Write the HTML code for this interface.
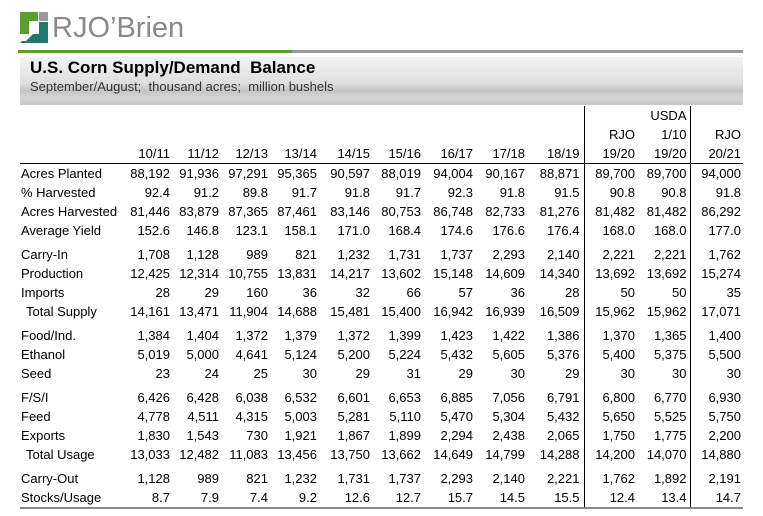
<!DOCTYPE html>
<html><head><meta charset="utf-8"><style>
body{margin:0;width:763px;height:516px;background:#fff;position:relative;overflow:hidden;font-family:"Liberation Sans",sans-serif;color:#000}
.abs{position:absolute}
table{position:absolute;left:20px;top:106px;border-collapse:collapse;font-size:13px;table-layout:fixed}
td{padding:0 2px 0 0;text-align:right;white-space:nowrap;height:19px;line-height:19px}
td:first-child{text-align:left;padding-left:1px}
td.v1{border-right:1px solid #000;padding-right:4px}
td.v2{border-right:1px solid #000;padding-right:3px}
tr.h td{height:19px;line-height:19px}
tr.hl td{border-bottom:1px solid #000}
tr.g td{padding-top:5px}
tr.last td{border-bottom:2px solid #888}
.ind{padding-left:6px!important}
</style></head><body>
<svg class="abs" style="left:20px;top:12px" width="28" height="31" viewBox="0 0 28 31">
<path d="M0 0H18V9H9V22H0Z" fill="#5a9e2f"/>
<rect x="19" y="0" width="9" height="9" fill="#9a9a9a"/>
<path d="M9 22H19V10H28V31H0Z" fill="#1f7a6a"/>
<path d="M2 29L9 22H13L6 29Z" fill="#fff"/>
</svg>
<div class="abs" style="left:52px;top:11px;font-size:29px;color:#8a8a8a;letter-spacing:0px;line-height:34px">RJO’Brien</div>
<div class="abs" style="left:18px;top:50px;width:274px;height:3px;background:#5aa02c"></div>
<div class="abs" style="left:292px;top:50px;width:451px;height:3px;background:#9a9a9a"></div>
<div class="abs" style="left:20px;top:57px;width:723px;height:48px;background:linear-gradient(#f4f4f4 0%,#dedede 55%,#c4c4c4 70%,#d6d6d6 85%,#c8c8c8 100%)"></div>
<div class="abs" style="left:30px;top:57px;font-size:17px;font-weight:bold;line-height:21px">U.S. Corn Supply/Demand&nbsp; Balance</div>
<div class="abs" style="left:30px;top:79px;font-size:13px;color:#333;line-height:16px">September/August;&nbsp; thousand acres;&nbsp; million bushels</div>
<table>
<colgroup><col style="width:101px"><col style="width:51px"><col style="width:49px"><col style="width:49px"><col style="width:49px"><col style="width:53px"><col style="width:51px"><col style="width:52px"><col style="width:52px"><col style="width:57px"><col style="width:53px"><col style="width:53px"><col style="width:53px"></colgroup>
<tr class="h"><td></td><td></td><td></td><td></td><td></td><td></td><td></td><td></td><td></td><td class="v1"></td><td></td><td class="v2">USDA</td><td></td></tr>
<tr class="h"><td></td><td></td><td></td><td></td><td></td><td></td><td></td><td></td><td></td><td class="v1"></td><td>RJO</td><td class="v2">1/10</td><td>RJO</td></tr>
<tr class="h hl"><td></td><td>10/11</td><td>11/12</td><td>12/13</td><td>13/14</td><td>14/15</td><td>15/16</td><td>16/17</td><td>17/18</td><td class="v1">18/19</td><td>19/20</td><td class="v2">19/20</td><td>20/21</td></tr>
<tr><td>Acres Planted</td><td>88,192</td><td>91,936</td><td>97,291</td><td>95,365</td><td>90,597</td><td>88,019</td><td>94,004</td><td>90,167</td><td class="v1">88,871</td><td>89,700</td><td class="v2">89,700</td><td>94,000</td></tr>
<tr><td>% Harvested</td><td>92.4</td><td>91.2</td><td>89.8</td><td>91.7</td><td>91.8</td><td>91.7</td><td>92.3</td><td>91.8</td><td class="v1">91.5</td><td>90.8</td><td class="v2">90.8</td><td>91.8</td></tr>
<tr><td>Acres Harvested</td><td>81,446</td><td>83,879</td><td>87,365</td><td>87,461</td><td>83,146</td><td>80,753</td><td>86,748</td><td>82,733</td><td class="v1">81,276</td><td>81,482</td><td class="v2">81,482</td><td>86,292</td></tr>
<tr><td>Average Yield</td><td>152.6</td><td>146.8</td><td>123.1</td><td>158.1</td><td>171.0</td><td>168.4</td><td>174.6</td><td>176.6</td><td class="v1">176.4</td><td>168.0</td><td class="v2">168.0</td><td>177.0</td></tr>
<tr class="g"><td>Carry-In</td><td>1,708</td><td>1,128</td><td>989</td><td>821</td><td>1,232</td><td>1,731</td><td>1,737</td><td>2,293</td><td class="v1">2,140</td><td>2,221</td><td class="v2">2,221</td><td>1,762</td></tr>
<tr><td>Production</td><td>12,425</td><td>12,314</td><td>10,755</td><td>13,831</td><td>14,217</td><td>13,602</td><td>15,148</td><td>14,609</td><td class="v1">14,340</td><td>13,692</td><td class="v2">13,692</td><td>15,274</td></tr>
<tr><td>Imports</td><td>28</td><td>29</td><td>160</td><td>36</td><td>32</td><td>66</td><td>57</td><td>36</td><td class="v1">28</td><td>50</td><td class="v2">50</td><td>35</td></tr>
<tr><td class="ind">Total Supply</td><td>14,161</td><td>13,471</td><td>11,904</td><td>14,688</td><td>15,481</td><td>15,400</td><td>16,942</td><td>16,939</td><td class="v1">16,509</td><td>15,962</td><td class="v2">15,962</td><td>17,071</td></tr>
<tr class="g"><td>Food/Ind.</td><td>1,384</td><td>1,404</td><td>1,372</td><td>1,379</td><td>1,372</td><td>1,399</td><td>1,423</td><td>1,422</td><td class="v1">1,386</td><td>1,370</td><td class="v2">1,365</td><td>1,400</td></tr>
<tr><td>Ethanol</td><td>5,019</td><td>5,000</td><td>4,641</td><td>5,124</td><td>5,200</td><td>5,224</td><td>5,432</td><td>5,605</td><td class="v1">5,376</td><td>5,400</td><td class="v2">5,375</td><td>5,500</td></tr>
<tr><td>Seed</td><td>23</td><td>24</td><td>25</td><td>30</td><td>29</td><td>31</td><td>29</td><td>30</td><td class="v1">29</td><td>30</td><td class="v2">30</td><td>30</td></tr>
<tr class="g"><td>F/S/I</td><td>6,426</td><td>6,428</td><td>6,038</td><td>6,532</td><td>6,601</td><td>6,653</td><td>6,885</td><td>7,056</td><td class="v1">6,791</td><td>6,800</td><td class="v2">6,770</td><td>6,930</td></tr>
<tr><td>Feed</td><td>4,778</td><td>4,511</td><td>4,315</td><td>5,003</td><td>5,281</td><td>5,110</td><td>5,470</td><td>5,304</td><td class="v1">5,432</td><td>5,650</td><td class="v2">5,525</td><td>5,750</td></tr>
<tr><td>Exports</td><td>1,830</td><td>1,543</td><td>730</td><td>1,921</td><td>1,867</td><td>1,899</td><td>2,294</td><td>2,438</td><td class="v1">2,065</td><td>1,750</td><td class="v2">1,775</td><td>2,200</td></tr>
<tr><td class="ind">Total Usage</td><td>13,033</td><td>12,482</td><td>11,083</td><td>13,456</td><td>13,750</td><td>13,662</td><td>14,649</td><td>14,799</td><td class="v1">14,288</td><td>14,200</td><td class="v2">14,070</td><td>14,880</td></tr>
<tr class="g"><td>Carry-Out</td><td>1,128</td><td>989</td><td>821</td><td>1,232</td><td>1,731</td><td>1,737</td><td>2,293</td><td>2,140</td><td class="v1">2,221</td><td>1,762</td><td class="v2">1,892</td><td>2,191</td></tr>
<tr class="last"><td>Stocks/Usage</td><td>8.7</td><td>7.9</td><td>7.4</td><td>9.2</td><td>12.6</td><td>12.7</td><td>15.7</td><td>14.5</td><td class="v1">15.5</td><td>12.4</td><td class="v2">13.4</td><td>14.7</td></tr>
</table>
</body></html>
